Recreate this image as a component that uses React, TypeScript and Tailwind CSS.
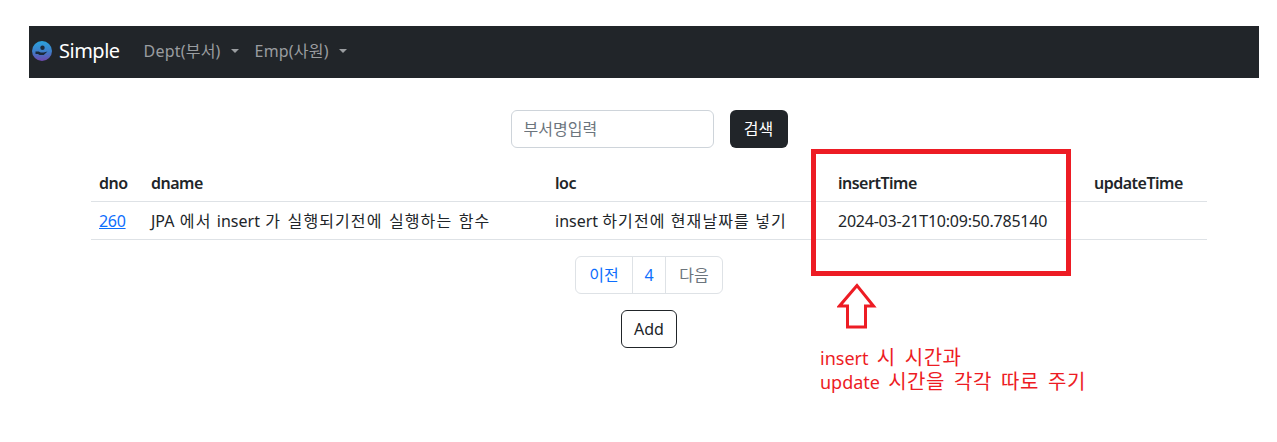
const font = "font-['Noto_Sans','Noto_Sans_CJK_KR',sans-serif]"

const Logo = () => (
  <svg width="20" height="20" viewBox="0 0 20 20" className="shrink-0">
    <defs>
      <linearGradient id="logo" x1="0" y1="0" x2="0" y2="1">
        <stop offset="0" stopColor="#2aa3dc" />
        <stop offset="0.55" stopColor="#3f7cc8" />
        <stop offset="1" stopColor="#6f48ae" />
      </linearGradient>
    </defs>
    <circle cx="10" cy="10" r="10" fill="url(#logo)" />
    <circle cx="10.5" cy="6.8" r="2.2" fill="#1b2a3a" />
    <path d="M3.5 10.5h3.2l2 .9h3l3.8-1-3.8 3.6H7.5L6 13H3.5z" fill="#1b2a3a" />
  </svg>
)

const Caret = () => (
  <span className="ml-[10px] inline-block w-0 h-0 border-x-[4px] border-x-transparent border-t-[4px] border-t-[#9a9da0]" />
)

// hangul runs are wider than the latin ones in the reference
const Ko = ({ children }: { children: React.ReactNode }) => (
  <span className="tracking-[1.1px]">{children}</span>
)
const KoLarge = ({ children }: { children: React.ReactNode }) => (
  <span className="text-[20px] tracking-[0.5px]">{children}</span>
)

export default function App() {
  return (
    <div className={`${font} relative h-[442px] w-[1277px] overflow-hidden bg-white text-[#212529] text-[16px]`}>
      <div className="pt-[26px] pl-[29px] pr-[18px]">
        <nav className="h-[52px] bg-[#212529] flex items-center pl-[3px] pb-[2px]">
          <Logo />
          <span className="ml-[7px] text-[20px] tracking-[-0.5px] text-white">Simple</span>
          <div className="ml-[24px] flex gap-[16px] text-[#9a9da0]">
            <span className="flex items-center tracking-[0.2px]">Dept(부서)<Caret /></span>
            <span className="flex items-center tracking-[0.2px]">Emp(사원)<Caret /></span>
          </div>
        </nav>

        <div className="ml-[62px] w-[1116px]">
          <form className="mt-[32px] flex justify-center gap-[16px]">
            <input
              placeholder="부서명입력"
              className="w-[203px] h-[38px] px-[12px] border border-[#ced4da] rounded-[6px] outline-none placeholder:text-[#6c757d]"
            />
            <button type="button" className="w-[58px] h-[38px] rounded-[6px] bg-[#212529] text-white">
              검색
            </button>
          </form>

          <table className="mt-[16px] w-full table-fixed border-collapse">
            <thead>
              <tr className="h-[37px] border-b border-[#dee2e6] text-left tracking-[-0.5px]">
                <th className="w-[52px] px-[8px] pt-[2px] font-semibold">dno</th>
                <th className="w-[404px] px-[8px] pt-[2px] font-semibold">dname</th>
                <th className="w-[283px] px-[8px] pt-[2px] font-semibold">loc</th>
                <th className="w-[256px] px-[8px] pt-[2px] font-semibold">insertTime</th>
                <th className="px-[8px] pt-[2px] font-semibold">updateTime</th>
              </tr>
            </thead>
            <tbody>
              <tr className="h-[38px] border-b border-[#dee2e6]">
                <td className="px-[8px] pt-[2px]"><a href="#" className="text-[#0d6efd] underline tracking-[-0.3px]">260</a></td>
                <td className="px-[8px] pt-[2px] whitespace-nowrap [word-spacing:1.2px]">
                  JPA <Ko>에서</Ko> insert <Ko>가 실행되기전에 실행하는 함수</Ko>
                </td>
                <td className="px-[8px] pt-[2px] whitespace-nowrap">
                  insert <Ko>하기전에 현재날짜를 넣기</Ko>
                </td>
                <td className="px-[8px] pt-[2px] whitespace-nowrap tracking-[-0.23px]">2024-03-21T10:09:50.785140</td>
                <td className="px-[8px]"></td>
              </tr>
            </tbody>
          </table>

          <div className="mt-[16px] flex justify-center">
            <ul className="flex h-[38px] border border-[#dee2e6] rounded-[6px]">
              <li className="w-[57px] flex items-center justify-center border-r border-[#dee2e6] text-[#0d6efd]">이전</li>
              <li className="w-[33px] flex items-center justify-center border-r border-[#dee2e6] text-[#0d6efd]">4</li>
              <li className="w-[56px] flex items-center justify-center text-[#6c757d]">다음</li>
            </ul>
          </div>

          <div className="mt-[16px] flex justify-center">
            <button type="button" className="w-[56px] h-[38px] border border-[#212529] rounded-[6px]">
              Add
            </button>
          </div>
        </div>
      </div>

      {/* annotation drawn over the screenshot */}
      <div className="absolute left-[820px] top-[346px] text-[18px] leading-[24px] text-[#ed1c24] whitespace-nowrap [word-spacing:3.5px]">
        <div>insert <KoLarge>시 시간과</KoLarge></div>
        <div>update <KoLarge>시간을 각각 따로 주기</KoLarge></div>
      </div>
      <div className="absolute left-[811px] top-[149px] w-[260px] h-[127px] border-[5px] border-[#ed1c24]" />
      <svg width="40" height="48" viewBox="0 0 40 48" className="absolute left-[837px] top-[283px]">
        <path d="M20 2.5 2.5 23H10.5V44H28.5V23H36.5Z" fill="white" stroke="#ed1c24" strokeWidth="3" />
      </svg>
    </div>
  )
}
